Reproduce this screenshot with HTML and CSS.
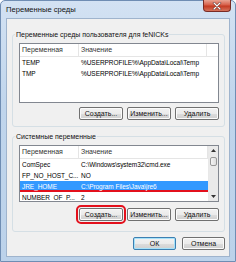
FILE: index.html
```html
<!DOCTYPE html>
<html lang="ru">
<head>
<meta charset="utf-8">
<link rel="stylesheet" href="styles.css">
</head>
<body>
<div class="window">
  <div class="titlebar">
    <span class="title">Переменные среды</span>
    <span class="close"><svg width="10" height="8" viewBox="0 0 10 8"><path d="M2 1 L8 7 M8 1 L2 7" stroke="#5a1a14" stroke-width="2.4" stroke-linecap="round"/><path d="M2 1 L8 7 M8 1 L2 7" stroke="#fff" stroke-width="1.4" stroke-linecap="round"/></svg></span>
  </div>
  <div class="body">
    <fieldset class="group">
      <legend>Переменные среды пользователя для feNICKs</legend>
      <div class="list list-user">
        <div class="list-main">
          <div class="header"><span class="c1">Переменная</span><span class="c2">Значение</span><span class="c3"></span></div>
          <div class="row"><span class="c1">TEMP</span><span class="c2">%USERPROFILE%\AppData\Local\Temp</span></div>
          <div class="row"><span class="c1">TMP</span><span class="c2">%USERPROFILE%\AppData\Local\Temp</span></div>
        </div>
      </div>
      <div class="buttons">
        <button class="btn">Создать...</button>
        <button class="btn">Изменить...</button>
        <button class="btn">Удалить</button>
      </div>
    </fieldset>
    <fieldset class="group group-sys">
      <legend>Системные переменные</legend>
      <div class="list list-sys">
        <div class="list-main">
          <div class="header"><span class="c1">Переменная</span><span class="c2">Значение</span></div>
          <div class="row"><span class="c1">ComSpec</span><span class="c2">C:\Windows\system32\cmd.exe</span></div>
          <div class="row"><span class="c1">FP_NO_HOST_C...</span><span class="c2">NO</span></div>
          <div class="row sel"><span class="c1">JRE_HOME</span><span class="c2">C:\Program Files\Java\jre6</span></div>
          <div class="row"><span class="c1">NUMBER_OF_P...</span><span class="c2">2</span></div>
        </div>
        <div class="scrollbar">
          <div class="sb-btn"><svg width="5" height="3" viewBox="0 0 5 3"><path d="M0 3 L2.5 0 L5 3Z" fill="#333"/></svg></div>
          <div class="sb-track"><div class="sb-thumb"></div></div>
          <div class="sb-btn"><svg width="5" height="3" viewBox="0 0 5 3"><path d="M0 0 L2.5 3 L5 0Z" fill="#333"/></svg></div>
        </div>
      </div>
      <div class="buttons buttons-sys">
        <button class="btn marked">Создать...</button>
        <button class="btn">Изменить...</button>
        <button class="btn">Удалить</button>
      </div>
    </fieldset>
    <div class="dialog-buttons">
      <button class="btn btn-default">ОК</button>
      <button class="btn">Отмена</button>
    </div>
  </div>
</div>
</body>
</html>
```

FILE: styles.css
```css
* { box-sizing: border-box; }
html, body { margin: 0; padding: 0; }
body {
  width: 236px;
  height: 262px;
  overflow: hidden;
  font-family: "Liberation Sans", Arial, sans-serif;
  font-size: 7px;
  color: #000;
  background: #fff;
}
.window {
  width: 236px;
  height: 262px;
  display: flex;
  flex-direction: column;
  padding: 0 5px 4px 5px;
  border: 1px solid #6f8db3;
  border-radius: 5px 5px 0 0;
  background: linear-gradient(#d3e2f3, #c0d5ec 40%, #bcd2ea);
}
.titlebar {
  height: 17px;
  display: flex;
  align-items: flex-start;
}
.title {
  margin-top: 4px;
  line-height: 9px;
  font-size: 7.6px;
  color: #111;
}
.close {
  margin-left: auto;
  margin-right: -1px;
  margin-top: -1px;
  width: 28px;
  height: 12px;
  display: flex;
  align-items: center;
  justify-content: center;
  border: 1px solid #7a2b24;
  border-top: none;
  border-radius: 0 0 4px 4px;
  background: linear-gradient(#e8a493, #d7604a 45%, #c43a22 55%, #d5735c);
}
.body {
  flex: 1;
  background: #f0f0f0;
  border: 1px solid #9fb4cd;
  padding: 0 4px 0 5px;
  display: flex;
  flex-direction: column;
}
.group {
  margin: 11px 0 0 0;
  padding: 4px 5px 6px 6px;
  border: 1px solid #d5dfe5;
  border-radius: 3px;
  min-width: 0;
}
.group legend {
  padding: 0 1px;
  margin-left: -4px;
  line-height: 9px;
  color: #111;
}
.group-sys { margin-top: 5px; padding-bottom: 10px; }
.list {
  display: flex;
  border: 1px solid #828790;
  background: #fff;
  overflow: hidden;
}
.list-user { height: 60px; }
.list-sys { height: 57px; }
.list-main {
  flex: 1;
  min-width: 0;
  overflow: hidden;
}
.header {
  display: flex;
  height: 13px;
  line-height: 12px;
  border-bottom: 1px solid #e5e5e5;
  color: #333;
}
.header span {
  border-right: 1px solid #e5e5e5;
}
.header .c3 { border-right: none; flex: 1; }
.c1 {
  width: 59px;
  flex: none;
  padding-left: 2px;
  white-space: nowrap;
  overflow: hidden;
}
.c2 {
  width: 128px;
  flex: none;
  padding-left: 2px;
  white-space: nowrap;
  overflow: hidden;
}
.list-sys .c2 { flex: 1; width: auto; }
.row {
  display: flex;
  height: 11px;
  line-height: 11px;
  font-size: 6.5px;
  letter-spacing: -0.05px;
}
.row.sel {
  background: #3399ff;
  color: #fff;
  box-shadow: inset 0 -2px 0 #e3101c;
}
.scrollbar {
  width: 10px;
  flex: none;
  display: flex;
  flex-direction: column;
  background: #eaeaea;
  border-left: 1px solid #e8e8e8;
}
.sb-btn {
  height: 9px;
  display: flex;
  align-items: center;
  justify-content: center;
}
.sb-track {
  flex: 1;
  padding-top: 2px;
}
.sb-thumb {
  height: 9px;
  margin: 0 1px;
  border: 1px solid #979797;
  border-radius: 2px;
  background: linear-gradient(90deg, #f4f4f4, #dedede);
}
.buttons {
  display: flex;
  justify-content: flex-end;
  gap: 4px;
  margin-top: 4px;
}
.buttons-sys { margin-top: 6px; }
.btn {
  width: 44px;
  height: 13px;
  padding: 0;
  margin: 0;
  font-family: inherit;
  font-size: 7px;
  line-height: 11px;
  color: #111;
  border: 1px solid #707070;
  border-radius: 2px;
  background: linear-gradient(#f2f2f2, #ebebeb 50%, #dddddd 51%, #cfcfcf);
  box-shadow: inset 0 0 0 1px #fbfbfb;
}
.btn.marked {
  outline: 2px solid #e3101c;
  outline-offset: 1px;
}
.btn-default {
  border-color: #3c7fb1;
  box-shadow: inset 0 0 0 1px #a6e2fa;
}
.dialog-buttons {
  display: flex;
  justify-content: flex-end;
  gap: 6px;
  margin-top: 5px;
}
.dialog-buttons .btn { width: 43px; }
```
